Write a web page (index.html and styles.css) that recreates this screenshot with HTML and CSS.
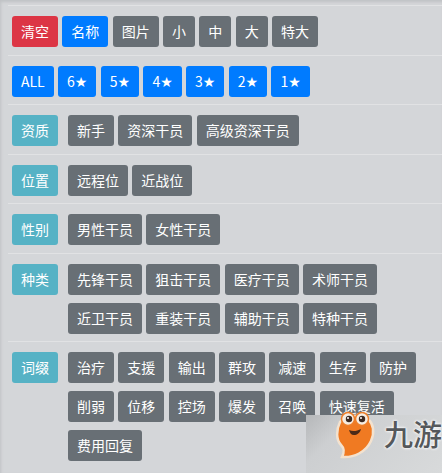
FILE: index.html
```html
<!DOCTYPE html>
<html lang="zh">
    <head>
        <meta charset="UTF-8">
        <title>干员筛选</title>
        <link rel="stylesheet" href="styles.css">
    </head>
    <body>
        <div class="panel">
            <div class="row">
                <div class="tags wide">
                    <span class="btn red">清空</span>
                    <span class="btn blue">名称</span>
                    <span class="btn">图片</span>
                    <span class="btn">小</span>
                    <span class="btn">中</span>
                    <span class="btn">大</span>
                    <span class="btn">特大</span>
                </div>
            </div>
            <div class="row">
                <div class="tags wide">
                    <span class="btn blue">ALL</span>
                    <span class="btn blue">6<i class="star">★</i></span>
                    <span class="btn blue">5<i class="star">★</i></span>
                    <span class="btn blue">4<i class="star">★</i></span>
                    <span class="btn blue">3<i class="star">★</i></span>
                    <span class="btn blue">2<i class="star">★</i></span>
                    <span class="btn blue">1<i class="star">★</i></span>
                </div>
            </div>
            <div class="row">
                <span class="btn label">资质</span>
                <div class="tags">
                    <span class="btn">新手</span>
                    <span class="btn">资深干员</span>
                    <span class="btn">高级资深干员</span>
                </div>
            </div>
            <div class="row">
                <span class="btn label">位置</span>
                <div class="tags">
                    <span class="btn">远程位</span>
                    <span class="btn">近战位</span>
                </div>
            </div>
            <div class="row">
                <span class="btn label">性别</span>
                <div class="tags">
                    <span class="btn">男性干员</span>
                    <span class="btn">女性干员</span>
                </div>
            </div>
            <div class="row">
                <span class="btn label">种类</span>
                <div class="tags">
                    <span class="btn">先锋干员</span>
                    <span class="btn">狙击干员</span>
                    <span class="btn">医疗干员</span>
                    <span class="btn">术师干员</span>
                    <span class="btn">近卫干员</span>
                    <span class="btn">重装干员</span>
                    <span class="btn">辅助干员</span>
                    <span class="btn">特种干员</span>
                </div>
            </div>
            <div class="row">
                <span class="btn label">词缀</span>
                <div class="tags">
                    <span class="btn">治疗</span>
                    <span class="btn">支援</span>
                    <span class="btn">输出</span>
                    <span class="btn">群攻</span>
                    <span class="btn">减速</span>
                    <span class="btn">生存</span>
                    <span class="btn">防护</span>
                    <span class="btn">削弱</span>
                    <span class="btn">位移</span>
                    <span class="btn">控场</span>
                    <span class="btn">爆发</span>
                    <span class="btn">召唤</span>
                    <span class="btn">快速复活</span>
                    <span class="btn">费用回复</span>
                </div>
            </div>
        </div>

        <div class="watermark">
            <svg class="mascot" width="42" height="52" viewBox="0 0 42 52">
                <path d="M6 12C2 20 2 30 7 35C10 38 11 41 8 47C20 48 32 42 37 31C41 22 39 14 35 10C28 4 12 4 6 12Z" fill="#f07a22" stroke="#f3e2cf" stroke-width="2.5"/>
                <circle cx="14" cy="9" r="6.5" fill="#f6ede2" stroke="#ee7f2a" stroke-width="1.5"/>
                <circle cx="28" cy="9" r="6.5" fill="#f6ede2" stroke="#ee7f2a" stroke-width="1.5"/>
                <circle cx="15" cy="9" r="3.2" fill="#3c2a22"/>
                <circle cx="28" cy="9" r="3.2" fill="#3c2a22"/>
                <circle cx="14" cy="8" r="1" fill="#fff"/>
                <circle cx="27" cy="8" r="1" fill="#fff"/>
                <path d="M15 20C19 22 23 21 27 19C26 23 23 25 20 25C17 25 16 23 15 20Z" fill="#4a2a18"/>
            </svg>
            <span class="brand">九游</span>
        </div>
    </body>
</html>
```

FILE: styles.css
```css
html, body {
    margin: 0;
    padding: 0;
}
body {
    width: 442px;
    height: 473px;
    overflow: hidden;
    position: relative;
    background-color: #d4d6d9;
    font-family: "Noto Sans CJK SC", "Noto Sans", sans-serif;
    font-size: 14px;
}
.panel {
    height: 468px;
    padding-top: 5px;
    box-shadow: inset 1px 2px 3px #c0c2c5;
}
.row {
    display: flex;
    align-items: flex-start;
    margin-left: 8px;
    padding: 10px 0 7.5px 4px;
    border-top: 1px solid #e1e2e4;
}
.tags {
    display: flex;
    flex-wrap: wrap;
    gap: 8px 4.33px;
    width: 360px;
    margin-left: 10px;
}
.tags.wide {
    width: auto;
    margin-left: 0;
}
.btn {
    display: block;
    height: 31px;
    line-height: 31px;
    padding: 0 9px;
    border-radius: 3px;
    background-color: #686f75;
    color: #fff;
    white-space: nowrap;
}
.btn.red {
    background-color: #dc3545;
}
.btn.blue {
    background-color: #007bff;
}
.btn.label {
    background-color: #56b2c5;
}
.star {
    font-family: "DejaVu Sans", sans-serif;
    font-style: normal;
}
.watermark {
    position: absolute;
    left: 306px;
    top: 415px;
    width: 136px;
    height: 58px;
    background: linear-gradient(135deg, #b5b7b9 0%, #cdcfd1 25%, #d8dadb 100%);
}
.mascot {
    position: absolute;
    left: 28px;
    top: -5px;
}
.brand {
    position: absolute;
    left: 78px;
    top: 2px;
    font-size: 29px;
    font-weight: 500;
    line-height: 32px;
    color: #55585b;
    white-space: nowrap;
    text-shadow: 0 0 3px #fff, 0 0 3px #fff;
}
```
